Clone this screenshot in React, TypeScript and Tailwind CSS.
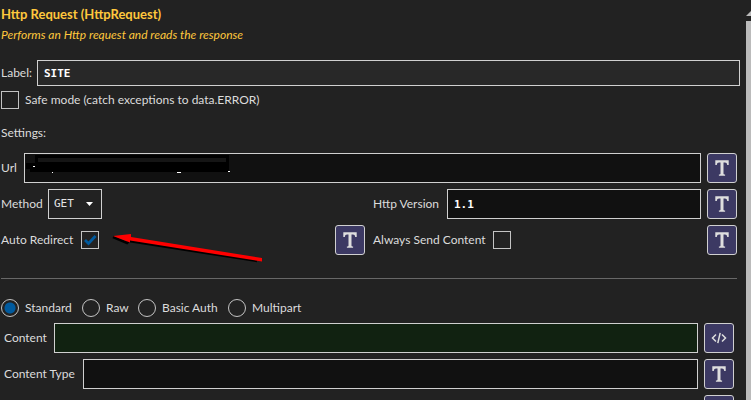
import React from 'react';

const ui = "font-['Lato','Noto_Sans',sans-serif]";
const mono = "font-['DejaVu_Sans_Mono','Liberation_Mono',monospace]";

const box = "h-[30px] min-w-0 flex-1 rounded-none border border-[#d0d0d0] bg-[#111111] px-1.5 text-[11px] font-bold text-white outline-none";
const check = "h-[18px] w-[18px] shrink-0 appearance-none border border-[#c4c4c4] bg-[#222222]";

const TextIcon = () => (
  <svg width="16" height="18" viewBox="0 0 16 18" fill="#dedede" aria-hidden="true">
    <path d="M1.300 1.300h13.400v4.700h-1.500c-.2-1.700-.8-2.500-2.300-2.500H9.500v11c0 .7.4.9 1.600 1v1.200H4.900v-1.200c1.200-.1 1.600-.3 1.600-1V3.500H5.100C3.600 3.500 3 4.300 2.800 6H1.300z" />
  </svg>
);

const CodeIcon = () => (
  <svg width="16" height="14" viewBox="0 0 16 14" fill="none" stroke="#dedede" strokeWidth="1.5" aria-hidden="true">
    <path d="M5 3.500L1.500 7L5 10.500M11 3.500L14.500 7L11 10.500M9.200 1.800L6.800 12.200" />
  </svg>
);

const ModeButton = ({ label, code = false }: { label: string; code?: boolean }) => (
  <button
    type="button"
    aria-label={label}
    className="flex h-[30px] w-[30px] shrink-0 items-center justify-center rounded-[3px] border border-[#d0d0d0] bg-[#3c3963]"
  >
    {code ? <CodeIcon /> : <TextIcon />}
  </button>
);

const contentModes = [
  { name: 'Standard', width: 'w-[81px]' },
  { name: 'Raw', width: 'w-[56px]' },
  { name: 'Basic Auth', width: 'w-[90px]' },
  { name: 'Multipart', width: 'w-[80px]' }
];

const App = () => {
  return (
    <div className={`flex h-screen overflow-hidden bg-[#222222] text-[12px] leading-4 whitespace-nowrap text-[#dcdcdc] ${ui}`}>
      <main className="min-w-0 flex-1 pl-px">
        {/* Header */}
        <h1 className="pt-1.5 text-[13px] leading-4 font-bold text-[#ffc83d]">Http Request (HttpRequest)</h1>
        <p className="mt-[5px] text-[#ffc83d] italic">Performs an Http request and reads the response</p>

        <div className="mt-[17px] flex items-center pr-1.5">
          <label htmlFor="label" className="w-9 shrink-0">Label:</label>
          <input
            id="label"
            defaultValue="SITE"
            className={`h-[26px] min-w-0 flex-1 border border-[#d0d0d0] bg-[#282828] px-1.5 text-[11px] font-bold text-white outline-none ${mono}`}
          />
        </div>
        <div className="mt-[5px] flex items-center gap-1.5">
          <input id="safe" type="checkbox" className={check} />
          <label htmlFor="safe">Safe mode (catch exceptions to data.ERROR)</label>
        </div>

        {/* Settings */}
        <h2 className="mt-4">Settings:</h2>
        <div className="mt-3 flex flex-col gap-1.5 pr-[9px]">
          <div className="flex items-center">
            <label htmlFor="url" className="w-[23px] shrink-0">Url</label>
            <div className="relative mr-1.5 flex min-w-0 flex-1">
              <input id="url" className={`${box} ${mono}`} />
              <svg className="pointer-events-none absolute top-0.5 left-0.5" width="205" height="20" aria-hidden="true">
                <path d="M9 0H203V17H4V14H0V8H9z" fill="#000000" />
                <path d="M12 3H200V7H12z" fill="#151515" />
                <path d="M7 11h2v1h-2zM202 16h2v1h-2zM26 17h1v1h-1zM151 17h4v1h-4z" fill="#ffffff" />
              </svg>
            </div>
            <ModeButton label="Url as text" />
          </div>

          <div className="grid grid-cols-2 gap-x-2 gap-y-1.5">
            <div className="flex items-center">
              <label htmlFor="method" className="w-[47px] shrink-0">Method</label>
              <div className="relative">
                <select
                  id="method"
                  className={`h-[30px] w-[54px] appearance-none border border-[#d0d0d0] bg-[#222222] pl-[5px] text-[11px] text-[#e4e4e4] outline-none ${mono}`}
                >
                  <option>GET</option>
                  <option>POST</option>
                  <option>PUT</option>
                </select>
                <svg className="pointer-events-none absolute top-[13px] right-[9px]" width="7" height="4" aria-hidden="true">
                  <path d="M0 0h7L3.500 4z" fill="#ffffff" />
                </svg>
              </div>
            </div>
            <div className="flex items-center">
              <label htmlFor="version" className="w-[74px] shrink-0">Http Version</label>
              <input id="version" defaultValue="1.1" className={`mr-1.5 ${box} ${mono}`} />
              <ModeButton label="Http version as text" />
            </div>

            <div className="relative flex items-center">
              <label htmlFor="redirect" className="w-20 shrink-0">Auto Redirect</label>
              <div className="relative mr-auto flex">
                <input id="redirect" type="checkbox" defaultChecked className={check} />
                <svg className="pointer-events-none absolute inset-0" width="18" height="18" aria-hidden="true">
                  <path d="M4 9L7.500 12.500L14.500 5" fill="none" stroke="#005a9e" strokeWidth="2.800" />
                </svg>
              </div>
              <ModeButton label="Auto redirect as text" />
              {/* Pointer to the redirect option */}
              <svg className="pointer-events-none absolute top-2 left-[110px]" width="154" height="34" aria-hidden="true">
                <path d="M2 4L16 10L18 8L146 28" fill="none" stroke="#000000" strokeWidth="2.500" />
                <path d="M2 3L20 1V4L151 25V28.500L19 7.500V9.500z" fill="#ff0000" />
              </svg>
            </div>
            <div className="flex items-center">
              <label htmlFor="always" className="w-[120px] shrink-0">Always Send Content</label>
              <input id="always" type="checkbox" className={`mr-auto ${check}`} />
              <ModeButton label="Always send content as text" />
            </div>
          </div>
        </div>

        <hr className="mt-[23px] mr-[9px] border-[#686868]" />

        {/* Content */}
        <div className="mt-5 flex">
          {contentModes.map((mode, index) => (
            <label key={mode.name} className={`flex items-center gap-1.5 ${mode.width}`}>
              <input
                type="radio"
                name="content-mode"
                defaultChecked={index === 0}
                className="h-[18px] w-[18px] shrink-0 appearance-none rounded-full border border-[#c4c4c4] checked:bg-[radial-gradient(circle,#005a9e_5px,transparent_6px)]"
              />
              {mode.name}
            </label>
          ))}
        </div>
        <div className="mt-1.5 flex flex-col gap-1.5 pr-3 pl-[3px]">
          <div className="flex items-center">
            <label htmlFor="content" className="w-[50px] shrink-0">Content</label>
            <input id="content" className="mr-1.5 h-[30px] min-w-0 flex-1 border border-[#d0d0d0] bg-[#112211] px-1.5 outline-none" />
            <ModeButton label="Content as code" code />
          </div>
          <div className="flex items-center">
            <label htmlFor="content-type" className="w-[79px] shrink-0">Content Type</label>
            <input id="content-type" className={`mr-1.5 ${box} ${mono}`} />
            <ModeButton label="Content type as text" />
          </div>
          <div className="flex justify-end">
            <ModeButton label="Next field as text" />
          </div>
        </div>
      </main>

      {/* Scrollbar */}
      <div className="flex w-[5px] shrink-0 flex-col pt-[11px]" aria-hidden="true">
        <svg width="5" height="5">
          <path d="M0 5L5 0V5z" fill="#bbbbbb" />
        </svg>
        <div className="mt-[5px] flex-1 bg-[#bbbbbb]" />
      </div>
    </div>
  );
};

export default App;
